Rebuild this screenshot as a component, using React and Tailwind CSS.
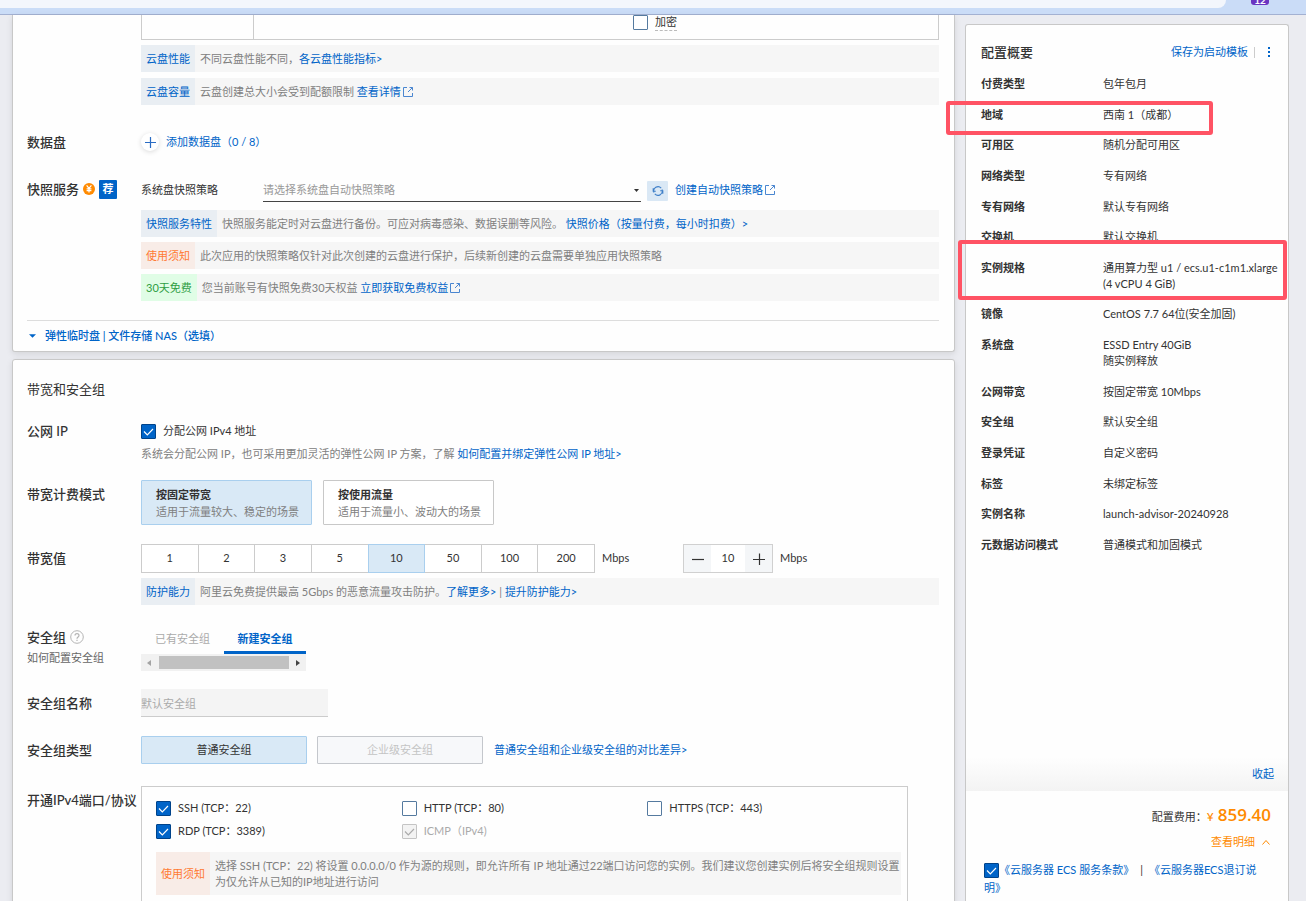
import { useState } from "react";

const bandwidthOptions = [1, 2, 3, 5, 10, 50, 100, 200];

const summary = [
  { label: "付费类型", value: ["包年包月"] },
  { label: "地域", value: ["西南 1（成都）"] },
  { label: "可用区", value: ["随机分配可用区"] },
  { label: "网络类型", value: ["专有网络"] },
  { label: "专有网络", value: ["默认专有网络"] },
  { label: "交换机", value: ["默认交换机"] },
  { label: "实例规格", value: ["通用算力型 u1 / ecs.u1-c1m1.xlarge", "(4 vCPU 4 GiB)"] },
  { label: "镜像", value: ["CentOS 7.7 64位(安全加固)"] },
  { label: "系统盘", value: ["ESSD Entry 40GiB", "随实例释放"] },
  { label: "公网带宽", value: ["按固定带宽 10Mbps"] },
  { label: "安全组", value: ["默认安全组"] },
  { label: "登录凭证", value: ["自定义密码"] },
  { label: "标签", value: ["未绑定标签"] },
  { label: "实例名称", value: ["launch-advisor-20240928"] },
  { label: "元数据访问模式", value: ["普通模式和加固模式"] }
];

const noticeTones = {
  blue: "bg-[#e9eef3] text-[#0064c8]",
  orange: "bg-[#f8ece7] text-[#ff7a33]",
  green: "bg-[#e0fde6] text-[#2f9e44]"
};

function Link({ children, className = "" }) {
  return (
    <a href="#" className={`text-[#0064c8] ${className}`}>
      {children}
    </a>
  );
}

function ExternalIcon() {
  return (
    <svg viewBox="0 0 12 12" className="ml-px inline-block size-3 align-[-2px]" fill="none" stroke="#4a86d0">
      <path d="M5 1.5H1.5v9h9V7M7.5 1.5h3v3M10.5 1.5 6 6" />
    </svg>
  );
}

function Notice({ tone = "blue", tag, children }) {
  return (
    <div className="flex bg-[#f6f6f6] leading-4 text-[#808080]">
      <span className={`flex shrink-0 items-center px-[5px] ${noticeTones[tone]}`}>{tag}</span>
      <p className="pt-[6px] pb-[5px] pl-[5px]">{children}</p>
    </div>
  );
}

function Checkbox({ label, ariaLabel, checked = false, disabled = false, dashed = false, className = "" }) {
  const [on, setOn] = useState(checked);

  return (
    <label className={`flex items-center gap-[7px] leading-4 ${disabled ? "text-[#aaa]" : ""} ${className}`}>
      <span className="grid size-[15px] shrink-0">
        <input
          type="checkbox"
          aria-label={ariaLabel}
          checked={on}
          disabled={disabled}
          onChange={() => setOn(!on)}
          className="size-[15px] appearance-none rounded-[1px] border border-[#557a9f] bg-white [grid-area:1/1] checked:border-[#00438a] checked:bg-[#0064c8] disabled:border-[#c4c4c4] disabled:bg-[#f3f3f3]"
        />
        {on && (
          <svg
            viewBox="0 0 15 15"
            className={`pointer-events-none size-[15px] [grid-area:1/1] ${disabled ? "text-[#aaa]" : "text-white"}`}
            fill="none"
            stroke="currentColor"
            strokeWidth="1.2"
          >
            <path d="m3 7.5 3.3 3.3L12 5" />
          </svg>
        )}
      </span>
      {label && <span className={dashed ? "border-b border-dashed border-[#bbb]" : ""}>{label}</span>}
    </label>
  );
}

function Row({ label, extra, className = "", children }) {
  return (
    <div className={`flex ${className}`}>
      <div className="w-[114px] shrink-0">
        <div className="flex items-center gap-1 text-[13px] leading-5 font-medium whitespace-nowrap">{label}</div>
        {extra}
      </div>
      <div className="min-w-0 flex-1">{children}</div>
    </div>
  );
}

function BrowserEdge() {
  return (
    <header className="flex h-[15px] shrink-0 items-start border-b border-[#a3b1d2] bg-[#cadcf7]">
      <div className="h-2 flex-1 rounded-br-lg bg-[#f3f6fc]" />
      <div className="flex w-20 pl-[25px]">
        <span className="flex h-[5px] w-[18px] items-end justify-center overflow-hidden rounded-b-[3px] bg-[#6a35c1] text-[10px] leading-[9px] font-bold text-white">
          12
        </span>
      </div>
    </header>
  );
}

function StorageCard() {
  return (
    <section className="rounded-b-[3px] border border-t-0 border-[#c8c8c8] bg-[#fefefe] pr-[15px] pl-[14px] shadow-[0_2px_6px_rgba(0,0,0,0.1)]">
      <div className="ml-[114px] flex h-[25px] border border-t-0 border-[#ccc]">
        <div className="w-[112px] border-r border-[#ccc]" />
        <Checkbox label="加密" dashed className="ml-[379px] h-[15px]" />
      </div>

      <div className="mt-[5px] ml-[114px] flex flex-col gap-[6px]">
        <Notice tag="云盘性能">
          不同云盘性能不同，<Link>各云盘性能指标&gt;</Link>
        </Notice>
        <Notice tag="云盘容量">
          云盘创建总大小会受到配额限制{" "}
          <Link>
            查看详情
            <ExternalIcon />
          </Link>
        </Notice>
      </div>

      <Row label="数据盘" className="mt-[27px]">
        <button type="button" className="flex h-5 items-center gap-[7px] text-[#0064c8]">
          <span className="flex size-[18px] items-center justify-center rounded-full bg-white shadow-[0_1px_5px_rgba(0,0,0,0.14)]">
            <svg viewBox="0 0 11 11" className="size-[11px]" stroke="#2a6cc4" strokeWidth="1.2">
              <path d="M5.5 0v11M0 5.5h11" />
            </svg>
          </span>
          添加数据盘（0 / 8）
        </button>
      </Row>

      <Row
        className="mt-[27px]"
        label={
          <>
            快照服务
            <svg viewBox="0 0 12 12" className="size-3 shrink-0" fill="none">
              <circle cx="6" cy="6" r="6" fill="#ff8a00" />
              <path d="m3.6 2.4 2.4 3 2.4-3M6 5.4v4.2M3.6 5.8h4.8M3.6 7.6h4.8" stroke="#fff" strokeWidth="1.2" />
            </svg>
            <span className="flex h-[19px] w-[18px] items-center justify-center rounded-[1px] bg-[#0064c8] text-[11px] font-bold text-white">
              荐
            </span>
          </>
        }
      >
        <div className="flex h-[23px] items-center">
          <label htmlFor="snapshot-policy" className="w-[122px] shrink-0">
            系统盘快照策略
          </label>
          <div className="grid h-[23px] w-[378px] items-center">
            <select
              id="snapshot-policy"
              className="h-[23px] w-full appearance-none border-b border-[#444] bg-transparent text-[#999] [grid-area:1/1]"
            >
              <option>请选择系统盘自动快照策略</option>
            </select>
            <svg
              viewBox="0 0 5 3"
              className="pointer-events-none mr-[2px] h-[3px] w-[5px] justify-self-end [grid-area:1/1]"
              fill="#333"
            >
              <path d="M0 0h5L2.5 3z" />
            </svg>
          </div>
          <button
            type="button"
            aria-label="刷新"
            className="mr-[7px] ml-[6px] flex h-5 w-[21px] items-center justify-center rounded-[1px] bg-[#dae8f5]"
          >
            <svg viewBox="0 0 12 12" className="size-3" fill="none" stroke="#3f7fc8" strokeWidth="1.1">
              <path d="M2 7.5A4.3 4.3 0 0 1 9.2 3.1M10 4.5a4.3 4.3 0 0 1-7.2 4.4M1.2 3.2v3h2.6M10.8 8.8v-3H8.2" />
            </svg>
          </button>
          <Link>
            创建自动快照策略
            <ExternalIcon />
          </Link>
        </div>
        <div className="mt-2 flex flex-col gap-[5px]">
          <Notice tag="快照服务特性">
            快照服务能定时对云盘进行备份。可应对病毒感染、数据误删等风险。 <Link>快照价格（按量付费，每小时扣费）&gt;</Link>
          </Notice>
          <Notice tone="orange" tag="使用须知">
            此次应用的快照策略仅针对此次创建的云盘进行保护，后续新创建的云盘需要单独应用快照策略
          </Notice>
          <Notice tone="green" tag="30天免费">
            您当前账号有快照免费30天权益{" "}
            <Link>
              立即获取免费权益
              <ExternalIcon />
            </Link>
          </Notice>
        </div>
      </Row>

      <div className="mt-[19px] border-t border-[#ddd]">
        <button type="button" className="flex h-[30px] items-center gap-[9px] pl-[2px] font-medium text-[#0064c8]">
          <svg viewBox="0 0 8 4" className="h-1 w-[7px]" fill="currentColor">
            <path d="M0 0h8L4 4z" />
          </svg>
          弹性临时盘 | 文件存储 NAS（选填）
        </button>
      </div>
    </section>
  );
}

function BillingCard({ title, desc, active, onClick }) {
  return (
    <button
      type="button"
      onClick={onClick}
      className={`h-[45px] w-[171px] rounded-[1px] border pl-[14px] text-left leading-[17px] ${
        active ? "border-[#a9cfee] bg-[#d9e9f6]" : "border-[#c8c8c8] bg-white"
      }`}
    >
      <span className="block font-bold">{title}</span>
      <span className="block text-[#808080]">{desc}</span>
    </button>
  );
}

function NetworkCard() {
  const [billing, setBilling] = useState("fixed");
  const [bandwidth, setBandwidth] = useState(10);

  return (
    <section className="mt-[7px] rounded-[3px] border border-[#c8c8c8] bg-[#fefefe] pr-[15px] pb-8 pl-[14px] shadow-[0_2px_6px_rgba(0,0,0,0.1)]">
      <h2 className="mt-[19px] text-[13px] leading-5">带宽和安全组</h2>

      <Row label="公网 IP" className="mt-[22px]">
        <Checkbox label="分配公网 IPv4 地址" checked className="h-5" />
        <p className="mt-1 leading-[18px] text-[#808080]">
          系统会分配公网 IP，也可采用更加灵活的弹性公网 IP 方案，了解 <Link>如何配置并绑定弹性公网 IP 地址&gt;</Link>
        </p>
      </Row>

      <Row label={<span className="pt-1">带宽计费模式</span>} className="mt-[17px]">
        <div className="flex gap-[11px]">
          <BillingCard
            title="按固定带宽"
            desc="适用于流量较大、稳定的场景"
            active={billing === "fixed"}
            onClick={() => setBilling("fixed")}
          />
          <BillingCard
            title="按使用流量"
            desc="适用于流量小、波动大的场景"
            active={billing === "traffic"}
            onClick={() => setBilling("traffic")}
          />
        </div>
      </Row>

      <Row label={<span className="pt-1">带宽值</span>} className="mt-[19px]">
        <div className="flex h-[29px] items-center">
          <div className="flex w-[454px] pl-px">
            {bandwidthOptions.map((value) => (
              <button
                key={value}
                type="button"
                onClick={() => setBandwidth(value)}
                className={`-ml-px h-[29px] flex-1 border ${
                  bandwidth === value ? "z-10 border-[#a9cfee] bg-[#d9e9f6]" : "border-[#ccc] bg-white"
                }`}
              >
                {value}
              </button>
            ))}
          </div>
          <span className="ml-[7px] w-[81px]">Mbps</span>
          <div className="flex h-[29px] w-[90px] border border-[#d0d0d0]">
            <button
              type="button"
              aria-label="减少"
              onClick={() => setBandwidth(bandwidth - 1)}
              className="flex w-[27px] items-center justify-center bg-[#f4f6f8]"
            >
              <svg viewBox="0 0 12 12" className="size-3" stroke="#333" strokeWidth="1.2">
                <path d="M0 6.5h12" />
              </svg>
            </button>
            <input
              aria-label="带宽值"
              value={bandwidth}
              onChange={(e) => setBandwidth(Number(e.target.value))}
              className="w-[34px] bg-white text-center"
            />
            <button
              type="button"
              aria-label="增加"
              onClick={() => setBandwidth(bandwidth + 1)}
              className="flex w-[27px] items-center justify-center bg-[#f4f6f8]"
            >
              <svg viewBox="0 0 12 12" className="size-3" stroke="#333" strokeWidth="1.2">
                <path d="M0 6.5h12M6.5 0.5v12" />
              </svg>
            </button>
          </div>
          <span className="ml-[7px]">Mbps</span>
        </div>
        <div className="mt-[5px]">
          <Notice tag="防护能力">
            阿里云免费提供最高 5Gbps 的恶意流量攻击防护。<Link>了解更多&gt;</Link> | <Link>提升防护能力&gt;</Link>
          </Notice>
        </div>
      </Row>

      <Row
        className="mt-[22px]"
        label={
          <>
            安全组
            <svg viewBox="0 0 14 14" className="size-[14px] shrink-0" fill="none" stroke="#b4b4b4">
              <circle cx="7" cy="7" r="6.3" />
              <path d="M5 5.6c0-2.6 4-2.6 4 0C9 7 7 7 7 8.7M7 9.7v1.2" strokeWidth="1.2" />
            </svg>
          </>
        }
        extra={
          <a href="#" className="mt-px block leading-5 text-[#666]">
            如何配置安全组
          </a>
        }
      >
        <div className="w-[165px]">
          <div role="tablist" className="flex h-[27px] justify-between leading-6">
            <button type="button" role="tab" aria-selected="false" className="w-[83px] pb-[3px] text-[#aaa]">
              已有安全组
            </button>
            <button
              type="button"
              role="tab"
              aria-selected="true"
              className="w-[82px] border-b-3 border-[#0064c8] font-bold text-[#0064c8]"
            >
              新建安全组
            </button>
          </div>
          <div className="flex h-[17px] items-center justify-between bg-[#f1f1f1] px-[6px]">
            <svg viewBox="0 0 4 6" className="h-[6px] w-1" fill="#a3a3a3">
              <path d="M4 0v6L0 3z" />
            </svg>
            <div className="h-[13px] w-[130px] bg-[#c1c1c1]" />
            <svg viewBox="0 0 4 6" className="h-[6px] w-1" fill="#444">
              <path d="M0 0v6l4-3z" />
            </svg>
          </div>
        </div>
      </Row>

      <Row label={<label htmlFor="group-name" className="pt-1">安全组名称</label>} className="mt-[18px]">
        <input
          id="group-name"
          disabled
          value="默认安全组"
          className="block h-7 w-[187px] border-b border-[#ccc] bg-[#f4f4f4] text-[#aaa]"
        />
      </Row>

      <Row label={<span className="pt-1">安全组类型</span>} className="mt-[19px]">
        <div className="flex items-center">
          <button type="button" className="h-7 w-[166px] rounded-[1px] border border-[#a9cfee] bg-[#d9e9f6]">
            普通安全组
          </button>
          <button
            type="button"
            disabled
            className="mr-[11px] ml-[10px] h-7 w-[166px] rounded-[1px] border border-[#c4c7cc] bg-[#f7f8fa] text-[#c4c4c4]"
          >
            企业级安全组
          </button>
          <Link>普通安全组和企业级安全组的对比差异&gt;</Link>
        </div>
      </Row>

      <Row label={<span className="pt-1">开通IPv4端口/协议</span>} className="mt-[22px]">
        <div className="mr-[31px] border border-[#ccc] px-[14px] pt-[13px] pb-5">
          <div className="grid grid-cols-3 gap-y-[7px]">
            <Checkbox label="SSH (TCP：22)" checked />
            <Checkbox label="HTTP (TCP：80)" />
            <Checkbox label="HTTPS (TCP：443)" />
            <Checkbox label="RDP (TCP：3389)" checked />
            <Checkbox label="ICMP（IPv4)" checked disabled />
          </div>
          <div className="mt-[13px] -mr-2">
            <Notice tone="orange" tag="使用须知">
              选择 SSH (TCP：22) 将设置 0.0.0.0/0 作为源的规则，即允许所有 IP
              地址通过22端口访问您的实例。我们建议您创建实例后将安全组规则设置为仅允许从已知的IP地址进行访问
            </Notice>
          </div>
        </div>
      </Row>
    </section>
  );
}

function SummaryPanel() {
  return (
    <aside className="mt-[9px] flex w-[324px] shrink-0 flex-col rounded-t-[3px] border border-b-0 border-[#c8c8c8] bg-[#fefefe]">
      <div className="flex items-center pt-[17px] pr-[17px] pl-[15px]">
        <h2 className="flex-1 text-[13px] leading-5 font-medium">配置概要</h2>
        <Link>保存为启动模板</Link>
        <span className="ml-[6px] h-[11px] w-px bg-[#ccc]" />
        <button type="button" aria-label="更多" className="ml-[11px] flex w-[5px] flex-col items-center gap-[2px]">
          <span className="size-[2px] bg-[#0064c8]" />
          <span className="size-[2px] bg-[#0064c8]" />
          <span className="size-[2px] bg-[#0064c8]" />
        </button>
      </div>

      <dl className="mt-[14px] flex h-[477px] flex-col justify-between pl-[15px] leading-4">
        {summary.map((item) => (
          <div key={item.label} className="flex">
            <dt className="w-[122px] shrink-0 font-bold">{item.label}</dt>
            <dd className="whitespace-nowrap">
              {item.value.map((line) => (
                <span key={line} className="block">
                  {line}
                </span>
              ))}
            </dd>
          </div>
        ))}
      </dl>

      <div className="mt-auto flex h-[34px] items-center justify-end bg-linear-to-b from-[#fefefe] to-[#f3f3f3] pr-[14px]">
        <button type="button" className="text-[#0064c8]">
          收起
        </button>
      </div>

      <div className="h-[110px] shrink-0 pt-3 pl-[18px]">
        <p className="flex items-baseline justify-end pr-[17px] leading-6">
          配置费用：
          <span className="text-[12px] font-medium text-[#ff8a00]">¥</span>
          <strong className="ml-1 font-['Open_Sans'] text-[17px] font-semibold text-[#ff8a00]">859.40</strong>
        </p>
        <button
          type="button"
          className="mt-[5px] mr-[18px] ml-auto flex items-center gap-[7px] leading-4 text-[#ff8a00]"
        >
          查看明细
          <svg viewBox="0 0 8 5" className="h-[5px] w-2" fill="none" stroke="currentColor">
            <path d="m.5 4.5 3.5-4 3.5 4" />
          </svg>
        </button>
        <div className="mt-[11px] pr-5 leading-[18px]">
          <Checkbox ariaLabel="同意服务条款" checked className="float-left mt-[2px] h-[15px]" />
          <Link>《云服务器 ECS 服务条款》</Link>
          <span className="mx-[6px]">|</span>
          <Link>《云服务器ECS退订说明》</Link>
        </div>
      </div>
    </aside>
  );
}

function App() {
  return (
    <div className="relative flex h-screen flex-col overflow-hidden bg-[#ebecf1] font-[Lato,'Noto_Sans_CJK_SC',sans-serif] text-[11px] text-[#333]">
      <BrowserEdge />
      <div className="flex min-h-0 flex-1 gap-[10px] pr-[17px] pl-3">
        <main className="min-w-0 flex-1">
          <StorageCard />
          <NetworkCard />
        </main>
        <SummaryPanel />
      </div>

      {/* highlight frames over region and instance type */}
      <div className="pointer-events-none absolute top-[101px] right-[93px] h-[34px] w-[267px] rounded-[3px] border-4 border-[#ff5364]" />
      <div className="pointer-events-none absolute top-[240px] right-[19px] h-[60px] w-[329px] rounded-[3px] border-4 border-[#ff5364]" />
    </div>
  );
}

export default App;
